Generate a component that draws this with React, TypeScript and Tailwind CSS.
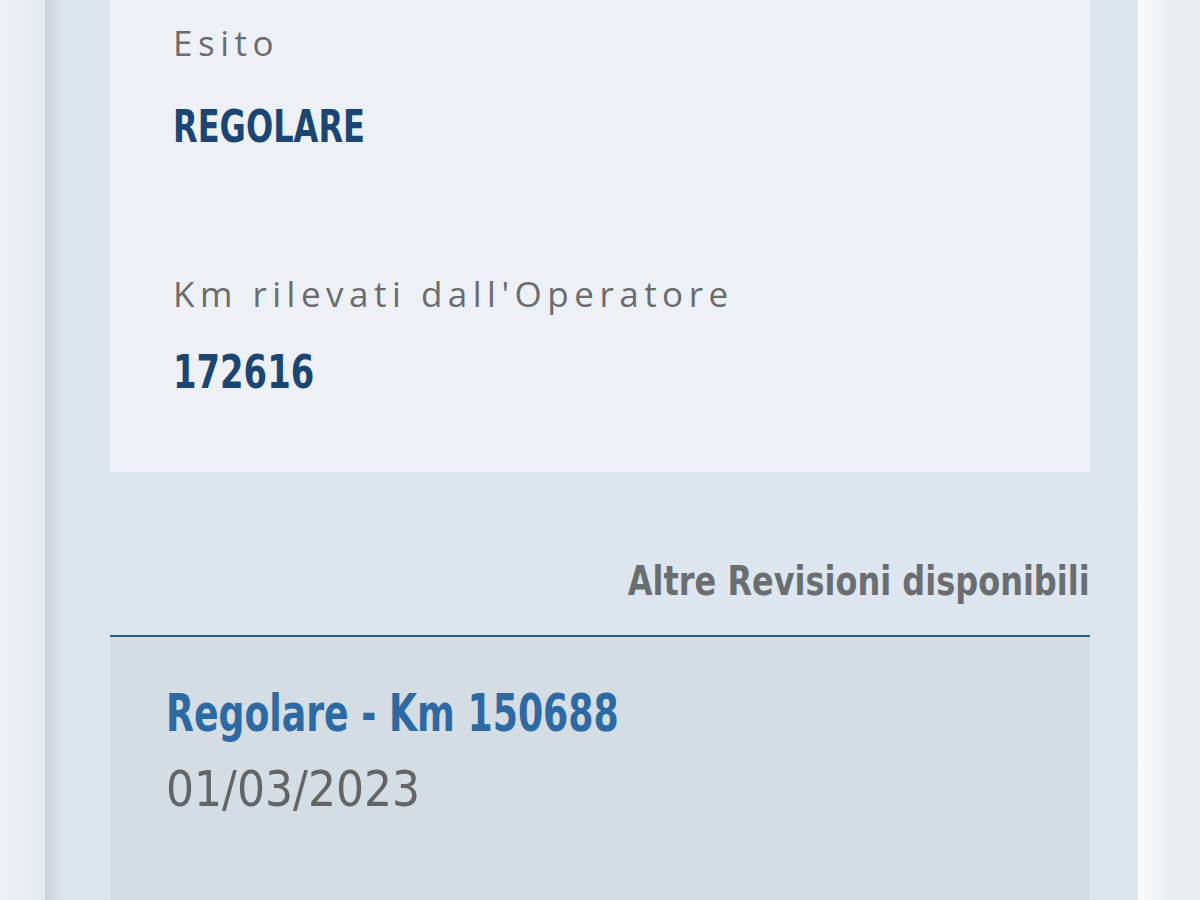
export default function App() {
  const label = "text-[35px] leading-[48px] tracking-[5.5px] text-[#6a6c6e] font-['Open_Sans',sans-serif] whitespace-nowrap";
  const narrow = "font-['DejaVu_Sans_Condensed','DejaVu_Sans',sans-serif] whitespace-nowrap";

  return (
    <div className="w-[1200px] h-[900px] flex overflow-hidden bg-[#eceff2]">
      <div className="w-[45px] shrink-0 bg-gradient-to-r from-[#eef1f4] to-[#e6eaee]" />
      <div className="w-[17px] shrink-0 bg-gradient-to-r from-[#ccd3db] to-[#dce4ed]" />

      <main className="w-[1076px] shrink-0 bg-[#dde5ee] px-[48px] flex flex-col">
        <section className="bg-[#edf1f5] h-[472px] pl-[63px] pt-[19px]">
          <p className={label}>Esito</p>
          <p className={`${narrow} mt-[35px] text-[44px] leading-[50px] font-bold text-[#1b4674]`}>
            <span className="inline-block origin-left scale-x-[0.81]">REGOLARE</span>
          </p>

          <p className={`${label} mt-[118px]`}>Km rilevati dall'Operatore</p>
          <p className={`${narrow} mt-[29px] text-[47px] leading-[50px] font-bold text-[#1b4674]`}>
            <span className="inline-block origin-left scale-x-[0.8]">172616</span>
          </p>
        </section>

        <h2 className={`${narrow} mt-[85px] flex justify-end text-[41px] leading-[48px] font-bold text-[#6b6e71]`}>
          <span className="inline-block origin-right scale-x-[0.867]">Altre Revisioni disponibili</span>
        </h2>

        <div className="mt-[30px] h-[2px] bg-[#2b5b82]" />

        <div className="flex-1 bg-[#d4dce4] pl-[56px] pt-[47px]">
          <p className={`${narrow} text-[51px] leading-[60px] font-bold text-[#2d6aa3]`}>
            <span className="inline-block origin-left scale-x-[0.79]">Regolare - Km 150688</span>
          </p>
          <p className={`${narrow} mt-[16px] text-[49px] leading-[60px] text-[#636567]`}>01/03/2023</p>
        </div>
      </main>

      <div className="w-[30px] shrink-0 bg-gradient-to-r from-[#fafbfc] to-[#ebeef1]" />
      <div className="flex-1 bg-[#e9edf0]" />
    </div>
  );
}
